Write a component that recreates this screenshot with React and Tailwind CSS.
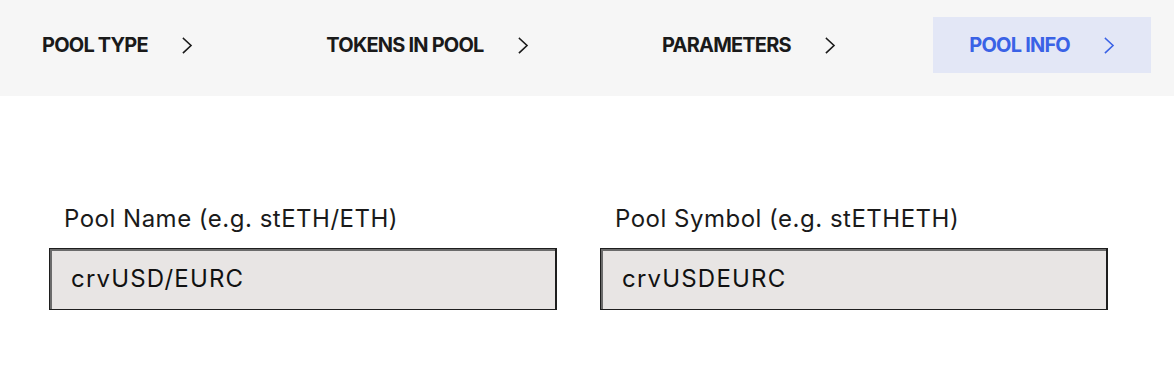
const tabs = [
  { label: "POOL TYPE", active: false },
  { label: "TOKENS IN POOL", active: false },
  { label: "PARAMETERS", active: false },
  { label: "POOL INFO", active: true },
];

function Chevron() {
  return (
    <svg width="11" height="17" viewBox="0 0 11 17" fill="none" stroke="currentColor" strokeWidth="1.6" strokeLinecap="square">
      <path d="M1.5 1.5 L9 8.5 L1.5 15.5" />
    </svg>
  );
}

function Field({ label, value }) {
  return (
    <div className="flex flex-col w-[508px]">
      <label className="pl-[15px] text-[24px] leading-[30px] text-[#1a1a1a] tracking-[0.5px]">
        {label}
      </label>
      <div className="mt-[14px] h-[62px] flex items-center bg-[#e8e5e4] border border-r-2 border-[#1e1e1e] shadow-[inset_2px_2px_0_#6b6b6b] pl-[21px]">
        <span className="text-[24px] text-[#111] tracking-[1.2px]">{value}</span>
      </div>
    </div>
  );
}

export default function App() {
  return (
    <div className="w-[1174px] h-[384px] bg-white" style={{ fontFamily: "Inter, 'Liberation Sans', sans-serif" }}>
      <div className="h-[96px] bg-[#f6f6f6] flex items-start justify-between pt-[17px] pl-[6px] pr-[23px]">
        {tabs.map((t) => (
          <button
            key={t.label}
            className={
              "h-[56px] px-[36px] flex items-center gap-[34px] text-[20px] font-bold tracking-[-0.8px] " +
              (t.active ? "bg-[#e3e7f6] text-[#3a62e6]" : "text-[#1a1a1a]")
            }
          >
            {t.label}
            <Chevron />
          </button>
        ))}
      </div>
      <div className="pt-[108px] pl-[49px] flex gap-[43px]">
        <Field label="Pool Name (e.g. stETH/ETH)" value="crvUSD/EURC" />
        <Field label="Pool Symbol (e.g. stETHETH)" value="crvUSDEURC" />
      </div>
    </div>
  );
}
